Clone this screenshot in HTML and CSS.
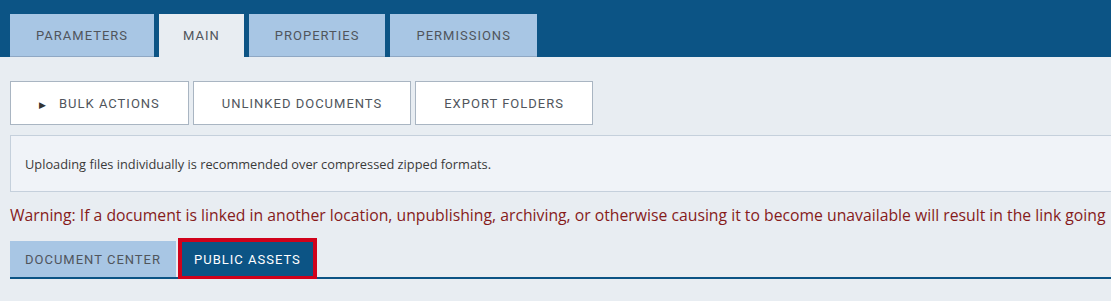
FILE: index.html
```html
<!DOCTYPE html>
<html lang="en">
<head>
    <meta charset="UTF-8">
    <title>Documents</title>
    <link rel="stylesheet" href="styles.css">
</head>
<body>
    <!-- Top tab strip -->
    <header class="topbar">
        <nav class="tabs">
            <a class="tab">Parameters</a>
            <a class="tab active">Main</a>
            <a class="tab">Properties</a>
            <a class="tab">Permissions</a>
        </nav>
    </header>

    <main class="content">
        <!-- Action buttons -->
        <div class="actions">
            <button class="action-btn"><span class="caret">&#9654;</span>Bulk Actions</button>
            <button class="action-btn">Unlinked Documents</button>
            <button class="action-btn">Export Folders</button>
        </div>

        <div class="info-box">
            Uploading files individually is recommended over compressed zipped formats.
        </div>

        <p class="warning">Warning: If a document is linked in another location, unpublishing, archiving, or otherwise causing it to become unavailable will result in the link going</p>

        <!-- Sub tabs -->
        <div class="subtabs">
            <a class="subtab">Document Center</a>
            <a class="subtab active">Public Assets</a>
        </div>
    </main>
</body>
</html>
```

FILE: styles.css
```css
/* Page basics */
body {
    margin: 0;
    background: #e8edf2;
    font-family: "Open Sans", "Lato", sans-serif;
    overflow: hidden;
}

/* Top blue bar with tabs */
.topbar {
    background: #0c5485;
    padding: 14px 10px 0;
}

.tabs {
    display: flex;
    gap: 5px;
}

.tab {
    height: 42px;
    padding: 0 26px;
    display: flex;
    align-items: center;
    background: #a8c6e4;
    border-bottom: 1px solid #8fa8c4;
    color: #50555c;
    font-family: "Roboto", sans-serif;
    font-size: 13px;
    letter-spacing: 1px;
    text-transform: uppercase;
}

.tab.active {
    background: #e8edf2;
    border-bottom-color: #e8edf2;
    padding: 0 24px;
}

.content {
    padding: 24px 0 0 10px;
}

/* Action buttons row */
.actions {
    display: flex;
    gap: 4px;
}

.action-btn {
    height: 44px;
    padding: 0 28px;
    background: #fff;
    border: 1px solid #a9b5c2;
    color: #50555c;
    font-family: "Roboto", sans-serif;
    font-size: 13px;
    letter-spacing: 1px;
    text-transform: uppercase;
}

.caret {
    font-size: 9px;
    margin-right: 12px;
    color: #333;
}

/* Notice box */
.info-box {
    margin-top: 10px;
    height: 55px;
    padding-left: 14px;
    display: flex;
    align-items: center;
    background: #f0f3f8;
    border: 1px solid #c5d0dc;
    border-right: none;
    color: #3a3a3a;
    font-size: 12.8px;
}

.warning {
    margin: 13px 0 0;
    line-height: 20px;
    color: #861b1b;
    font-size: 15.75px;
    white-space: nowrap;
}

/* Lower tab row */
.subtabs {
    display: flex;
    align-items: flex-end;
    margin-top: 13px;
    border-bottom: 2px solid #0c5485;
}

.subtab {
    height: 36px;
    padding: 0 15px;
    display: flex;
    align-items: center;
    background: #a8c6e4;
    color: #50555c;
    font-family: "Roboto", sans-serif;
    font-size: 13px;
    letter-spacing: 1px;
    text-transform: uppercase;
}

.subtab.active {
    height: 42px;
    box-sizing: border-box;
    padding: 0 12px;
    margin: 0 0 -3px 2px;
    border: 4px solid #d0021b;
    background: #0c5485;
    color: #fff;
}
```
